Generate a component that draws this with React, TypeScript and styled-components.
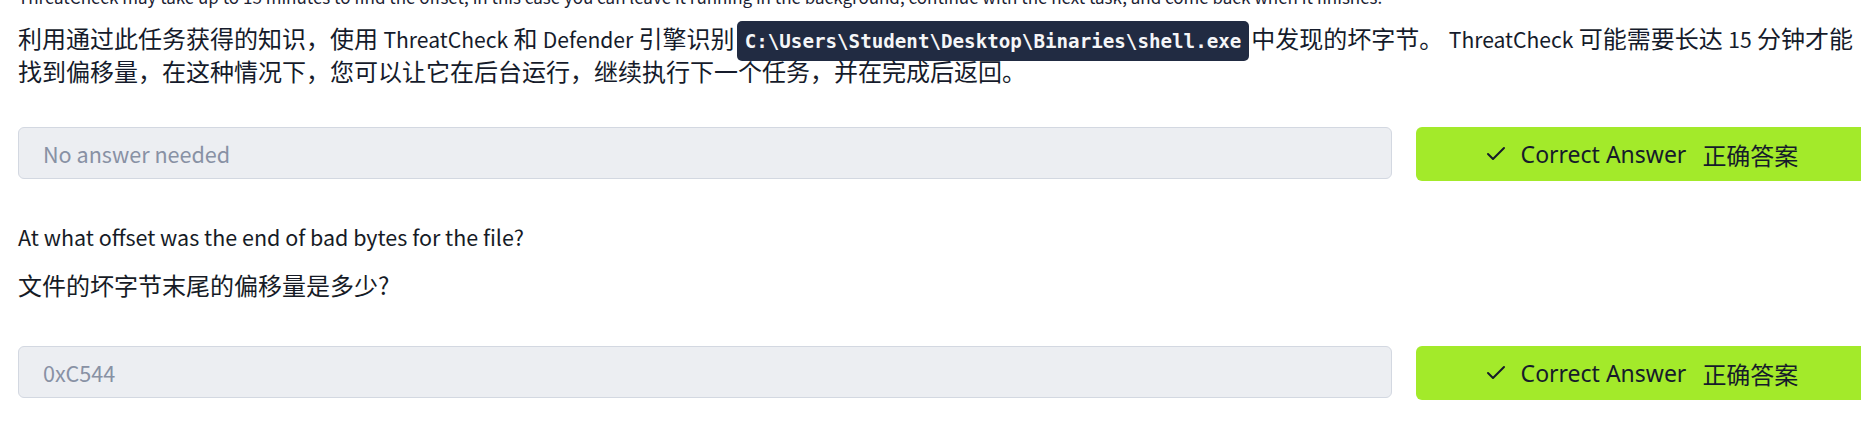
import React from "react";
import styled, { createGlobalStyle } from "styled-components";
import { Check } from "lucide-react";

const GlobalStyle = createGlobalStyle`
  html, body {
    margin: 0;
    padding: 0;
    background: #ffffff;
    overflow: hidden;
  }
  body {
    font-family: "Noto Sans CJK SC", "Noto Sans", sans-serif;
    color: #151b2b;
  }
`;

const Page = styled.main`
  width: 1848px;
  padding-left: 18px;
  display: flex;
  flex-direction: column;
`;

const SourceText = styled.p`
  margin: -18px 0 0;
  font-size: 17px;
  line-height: 30px;
  color: #1b2233;
  white-space: nowrap;
`;

const TranslatedText = styled.p`
  margin: 9px 0 0;
  font-size: 24px;
  line-height: 33px;
  color: #151b2b;
`;

const Latin = styled.span`
  font-size: 0.88em;
  line-height: 1;
`;

const Code = styled.code`
  font-family: "DejaVu Sans Mono", "Liberation Mono", monospace;
  font-weight: 700;
  font-size: 19.2px;
  line-height: 0;
  background: #212b42;
  color: #f5f6f8;
  padding: 9px 8px 8px 8px;
  margin: 0 2px 0 2px;
  border-radius: 5px;
`;

const AnswerRow = styled.div<{ $top: number }>`
  display: flex;
  align-items: flex-start;
  gap: 24px;
  margin-top: ${(p) => p.$top}px;
`;

const AnswerField = styled.div`
  flex: 1;
  height: 52px;
  box-sizing: border-box;
  border: 1px solid #d3d8e1;
  border-radius: 6px;
  background: #eceef2;
  display: flex;
  align-items: center;
  padding: 0 24px;
  font-size: 21.6px;
  color: #8891a4;
`;

const CorrectButton = styled.button`
  width: 450px;
  height: 54px;
  flex: none;
  border: none;
  border-radius: 6px;
  background: #a3ea2a;
  color: #161b2a;
  display: flex;
  align-items: center;
  justify-content: center;
  font-family: "Noto Sans", "Noto Sans CJK SC", sans-serif;
  font-size: 23px;
  padding: 0;
  cursor: pointer;
`;

const CheckIcon = styled(Check)`
  margin-right: 13px;
  flex: none;
`;

const Zh = styled.span`
  font-family: "Noto Sans CJK SC", sans-serif;
  font-size: 24px;
  margin-left: 16px;
`;

const Question = styled.p`
  margin: 39px 0 0;
  font-size: 21.5px;
  line-height: 33px;
  color: #161b26;
`;

const QuestionZh = styled.p`
  margin: 15px 0 0;
  font-size: 24px;
  line-height: 33px;
  color: #161b26;
`;

function Answer({ value, top }: { value: string; top: number }) {
  return (
    <AnswerRow $top={top}>
      <AnswerField>{value}</AnswerField>
      <CorrectButton>
        <CheckIcon size={24} strokeWidth={2} />
        Correct Answer
        <Zh>正确答案</Zh>
      </CorrectButton>
    </AnswerRow>
  );
}

export default function App() {
  return (
    <>
      <GlobalStyle />
      <Page>
        <SourceText>
          ThreatCheck may take up to 15 minutes to find the offset, in this case you can leave it running in the background, continue with the next task, and come back when it finishes.
        </SourceText>
        <TranslatedText>
          利用通过此任务获得的知识，使用 <Latin>ThreatCheck</Latin> 和 <Latin>Defender</Latin> 引擎识别
          <Code>C:\Users\Student\Desktop\Binaries\shell.exe</Code>
          中发现的坏字节。 <Latin>ThreatCheck</Latin> 可能需要长达 <Latin>15</Latin> 分钟才能找到偏移量，在这种情况下，您可以让它在后台运行，继续执行下一个任务，并在完成后返回。
        </TranslatedText>
        <Answer value="No answer needed" top={40} />
        <Question>At what offset was the end of bad bytes for the file?</Question>
        <QuestionZh>文件的坏字节末尾的偏移量是多少?</QuestionZh>
        <Answer value="0xC544" top={45} />
      </Page>
    </>
  );
}
